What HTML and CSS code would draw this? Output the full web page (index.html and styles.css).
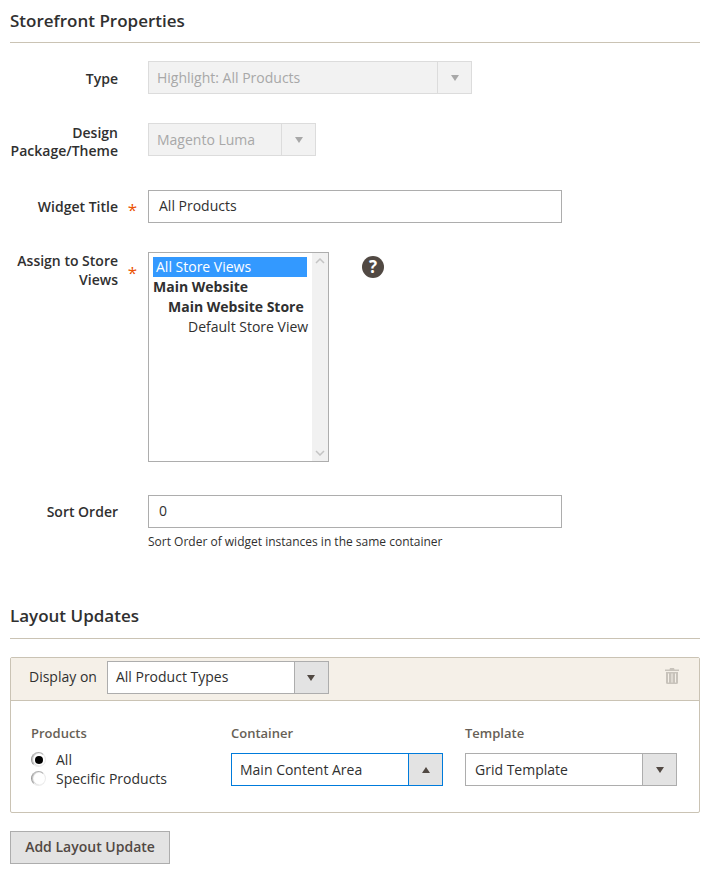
FILE: index.html
```html
<!DOCTYPE html>
<html lang="en">
<head>
  <meta charset="UTF-8">
  <title>Widget Instance</title>
  <meta name="viewport" content="width=device-width, initial-scale=1">
  <link rel="stylesheet" href="styles.css">
</head>
<body>
  <h2 class="section-title">Storefront Properties</h2>

  <div class="field">
    <div class="label low">Type</div>
    <div class="select disabled w-type"><span class="value">Highlight: All Products</span><span class="arrow"><i class="tri"></i></span></div>
  </div>

  <div class="field">
    <div class="label two-line">Design Package/Theme</div>
    <div class="select disabled w-theme"><span class="value">Magento Luma</span><span class="arrow"><i class="tri"></i></span></div>
  </div>

  <div class="field">
    <div class="label required">Widget Title</div>
    <div class="input">All Products</div>
  </div>

  <div class="field field-stores">
    <div class="label two-line required tall">Assign to Store Views</div>
    <div class="listbox">
      <div class="options">
        <div class="option selected">All Store Views</div>
        <div class="option group">Main Website</div>
        <div class="option group sub">Main Website Store</div>
        <div class="option leaf">Default Store View</div>
      </div>
      <div class="scrollbar">
        <svg width="10" height="6" viewBox="0 0 10 6"><path d="M1 5l4-4 4 4" fill="none" stroke="#c4c4c4" stroke-width="1.5"/></svg>
        <svg width="10" height="6" viewBox="0 0 10 6"><path d="M1 1l4 4 4-4" fill="none" stroke="#c4c4c4" stroke-width="1.5"/></svg>
      </div>
    </div>
    <div class="help">?</div>
  </div>

  <div class="field field-sort">
    <div class="label">Sort Order</div>
    <div>
      <div class="input">0</div>
      <div class="note">Sort Order of widget instances in the same container</div>
    </div>
  </div>

  <h2 class="section-title second">Layout Updates</h2>

  <div class="panel">
    <div class="panel-head">
      <span class="display-on">Display on</span>
      <div class="select w-display"><span class="value">All Product Types</span><span class="arrow"><i class="tri"></i></span></div>
      <svg class="trash" width="14" height="16" viewBox="0 0 14 16">
        <path d="M5 0h4l.5 1.500H14V3H0V1.500h4.500z" fill="#c8c3bb"/>
        <path d="M1 4h12v10.500a1.500 1.500 0 0 1-1.500 1.500h-9A1.500 1.500 0 0 1 1 14.500z" fill="#c8c3bb"/>
        <path d="M3.500 5.500v9M7 5.500v9M10.500 5.500v9" stroke="#f5f0e8" stroke-width="1"/>
      </svg>
    </div>
    <div class="panel-body">
      <div class="col col-products">
        <div class="col-title">Products</div>
        <div class="radio-row"><span class="radio checked"></span>All</div>
        <div class="radio-row"><span class="radio"></span>Specific Products</div>
      </div>
      <div class="col col-container">
        <div class="col-title">Container</div>
        <div class="select active w-container"><span class="value">Main Content Area</span><span class="arrow"><i class="tri up"></i></span></div>
      </div>
      <div class="col">
        <div class="col-title">Template</div>
        <div class="select w-template"><span class="value">Grid Template</span><span class="arrow"><i class="tri"></i></span></div>
      </div>
    </div>
  </div>

  <button class="btn" type="button">Add Layout Update</button>
</body>
</html>
```

FILE: styles.css
```css
* {
  box-sizing: border-box;
}
body {
  margin: 0;
  padding: 0 10px;
  font-family: "Open Sans", sans-serif;
  font-size: 14px;
  line-height: 18px;
  color: #303030;
  background: #fff;
}
.section-title {
  margin: 0 0 18px;
  padding: 9px 0 10px;
  height: 43px;
  font-size: 17px;
  line-height: 24px;
  font-weight: 600;
  color: #303030;
  border-bottom: 1px solid #cac3b4;
}
.section-title.second {
  padding-top: 8px;
}
.field {
  display: flex;
  margin-bottom: 29px;
}
.label {
  position: relative;
  flex: none;
  width: 108px;
  margin-right: 30px;
  padding-top: 8px;
  text-align: right;
  font-weight: 600;
}
.label.low {
  padding-top: 9px;
}
.label.two-line {
  padding-top: 1px;
  margin-bottom: 1px;
}
.label.tall {
  margin-top: -2px;
  line-height: 19px;
}
.label.required::after {
  content: "*";
  position: absolute;
  right: -19px;
  top: 11px;
  font-size: 17px;
  font-weight: 400;
  color: #eb5202;
}
.label.two-line.required::after {
  top: 13px;
}
.field-stores {
  margin-bottom: 33px;
}
.field-sort {
  margin-bottom: 46px;
}
.select {
  display: flex;
  height: 33px;
  background: #fff;
  border: 1px solid #adadad;
}
.select .value {
  flex: 1;
  padding: 7px 0 0 8px;
  white-space: nowrap;
}
.select .arrow {
  flex: none;
  width: 34px;
  display: flex;
  align-items: center;
  justify-content: center;
  background: #e3e3e3;
  border-left: 1px solid #adadad;
}
.tri {
  display: block;
  width: 0;
  height: 0;
  margin-top: 1px;
  border-left: 4.5px solid transparent;
  border-right: 4.5px solid transparent;
  border-top: 6px solid #514943;
}
.tri.up {
  border-top: 0;
  border-bottom: 6px solid #514943;
}
.select.disabled {
  background: #f2f2f2;
  border-color: #dcdcdc;
  color: #a8a8a8;
}
.select.disabled .arrow {
  background: #f2f2f2;
  border-left-color: #dcdcdc;
}
.select.disabled .tri {
  border-top-color: #a8a8a8;
}
.select.active {
  border-color: #007bdb;
}
.select.active .arrow {
  border-left-color: #007bdb;
}
.w-type {
  width: 324px;
}
.w-theme {
  width: 168px;
}
.w-display {
  width: 222px;
}
.w-display .value {
  padding-top: 6px;
}
.w-container {
  width: 212px;
}
.w-template {
  width: 212px;
}
.w-template .value {
  padding-left: 9px;
}
.input {
  width: 414px;
  height: 33px;
  padding: 6px 10px;
  background: #fff;
  border: 1px solid #adadad;
}
.note {
  margin-top: 6px;
  font-size: 12px;
  line-height: 16px;
}
.listbox {
  display: flex;
  width: 181px;
  height: 210px;
  border: 1px solid #adadad;
}
.options {
  flex: 1;
  padding: 4px 0 0 4px;
  line-height: 20px;
  white-space: nowrap;
}
.option.selected {
  width: 154px;
  padding-left: 3px;
  color: #fff;
  background: #3399ff;
}
.option.group {
  font-weight: 700;
}
.option.sub {
  padding-left: 15px;
}
.option.leaf {
  padding-left: 35px;
}
.scrollbar {
  flex: none;
  width: 16px;
  padding: 5px 0;
  display: flex;
  flex-direction: column;
  justify-content: space-between;
  align-items: center;
  background: #f1f1f1;
}
.help {
  width: 22px;
  height: 22px;
  margin: 4px 0 0 33px;
  border-radius: 50%;
  text-align: center;
  font-size: 17px;
  line-height: 22px;
  font-weight: 700;
  color: #fff;
  background: #514943;
}
.panel {
  border: 1px solid #cac3b4;
  border-radius: 2px;
  margin-bottom: 18px;
}
.panel-head {
  display: flex;
  align-items: center;
  height: 43px;
  padding: 0 20px 3px 18px;
  background: #f5f0e8;
  border-bottom: 1px solid #cac3b4;
}
.display-on {
  margin-right: 10px;
  margin-top: -1px;
}
.trash {
  margin-left: auto;
  margin-bottom: 3px;
}
.panel-body {
  display: flex;
  height: 111px;
  padding: 23px 0 0 20px;
}
.col-title {
  margin-bottom: 11px;
  font-size: 13px;
  font-weight: 600;
  color: #675f56;
}
.col-products {
  width: 200px;
}
.col-products .col-title {
  margin-bottom: 8px;
}
.col-container {
  width: 234px;
}
.radio-row {
  display: flex;
  align-items: center;
  height: 19px;
}
.radio {
  width: 15px;
  height: 15px;
  margin-right: 10px;
  border-radius: 50%;
  border: 1px solid #ececec;
  border-left-color: #9a9a9a;
  border-top-color: #b0b0b0;
  box-shadow: inset 1px 0 1px #bdbdbd;
  background: #fff;
  display: flex;
  align-items: center;
  justify-content: center;
}
.radio.checked::before {
  content: "";
  width: 8px;
  height: 8px;
  border-radius: 50%;
  background: #000;
}
.btn {
  display: block;
  width: 160px;
  height: 33px;
  padding: 0 0 2px;
  font-family: inherit;
  font-size: 14px;
  font-weight: 600;
  color: #514943;
  background: #e3e3e3;
  border: 1px solid #adadad;
}
```
